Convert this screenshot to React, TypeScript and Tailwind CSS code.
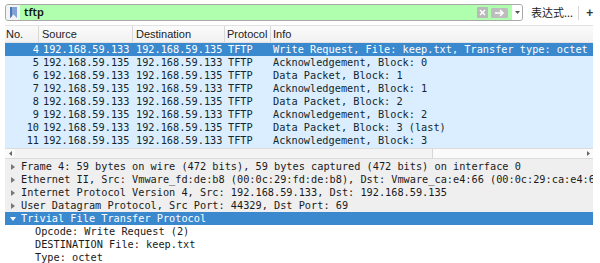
import React from 'react';

const MONO = { fontFamily: '"DejaVu Sans Mono", "Liberation Mono", monospace' };

const PACKETS = [
  { no: 4, src: '192.168.59.133', dst: '192.168.59.135', info: 'Write Request, File: keep.txt, Transfer type: octet' },
  { no: 5, src: '192.168.59.135', dst: '192.168.59.133', info: 'Acknowledgement, Block: 0' },
  { no: 6, src: '192.168.59.133', dst: '192.168.59.135', info: 'Data Packet, Block: 1' },
  { no: 7, src: '192.168.59.135', dst: '192.168.59.133', info: 'Acknowledgement, Block: 1' },
  { no: 8, src: '192.168.59.133', dst: '192.168.59.135', info: 'Data Packet, Block: 2' },
  { no: 9, src: '192.168.59.135', dst: '192.168.59.133', info: 'Acknowledgement, Block: 2' },
  { no: 10, src: '192.168.59.133', dst: '192.168.59.135', info: 'Data Packet, Block: 3 (last)' },
  { no: 11, src: '192.168.59.135', dst: '192.168.59.133', info: 'Acknowledgement, Block: 3' },
];

const TREE = [
  'Frame 4: 59 bytes on wire (472 bits), 59 bytes captured (472 bits) on interface 0',
  'Ethernet II, Src: Vmware_fd:de:b8 (00:0c:29:fd:de:b8), Dst: Vmware_ca:e4:66 (00:0c:29:ca:e4:66)',
  'Internet Protocol Version 4, Src: 192.168.59.133, Dst: 192.168.59.135',
  'User Datagram Protocol, Src Port: 44329, Dst Port: 69',
];

const TFTP_FIELDS = ['Opcode: Write Request (2)', 'DESTINATION File: keep.txt', 'Type: octet'];

function FilterBar() {
  return (
    <div className="flex h-[25px] items-center pl-[5px]">
      <div className="flex h-[17px] w-[518px] shrink-0 items-center overflow-hidden rounded-[3px] border border-[#a9a9a9] bg-[#afffaf]">
        <div className="flex h-full w-[14px] items-center justify-center bg-[#f4f4f4]">
          <svg width="7" height="11" viewBox="0 0 7 11">
            <path d="M0 0h7v11L3.5 7.5 0 11z" fill="#7fa3d6" />
            <path d="M0 0h2v9.2L0 11z" fill="#4d76b4" />
          </svg>
        </div>
        <span className="ml-[4px] flex-1 text-[11px] font-semibold text-[#111]" style={{ fontFamily: '"Noto Sans", sans-serif' }}>
          tftp
        </span>
        <svg width="11" height="11" viewBox="0 0 11 11" className="mr-[3px]">
          <rect width="11" height="11" rx="1" fill="#b9b9b9" />
          <path d="M3 3l5 5M8 3l-5 5" stroke="#fff" strokeWidth="1.5" />
        </svg>
        <svg width="17" height="10" viewBox="0 0 17 10" className="mr-[4px]">
          <rect width="17" height="10" rx="1.5" fill="#bdbdbd" />
          <path d="M4 5h8M9 2.2l3 2.8-3 2.8" stroke="#fff" strokeWidth="1.6" fill="none" />
        </svg>
        <div className="flex h-full w-[10px] items-center justify-center bg-white">
          <svg width="5" height="3" viewBox="0 0 5 3">
            <path d="M0 0h5L2.5 3z" fill="#555" />
          </svg>
        </div>
      </div>
      <span
        className="ml-[8px] whitespace-nowrap text-[11px] leading-none text-[#222]"
        style={{ fontFamily: '"Noto Sans CJK SC", sans-serif' }}
      >
        表达式...
      </span>
      <div className="ml-[5px] h-[14px] w-px shrink-0 bg-[#d6d6d6]" />
      <span className="ml-[7px] text-[12px] font-bold text-[#333]" style={{ fontFamily: '"Liberation Sans", sans-serif' }}>
        +
      </span>
    </div>
  );
}

function Header() {
  const cell = 'flex h-full items-center border-r border-[#d8d8d8]';
  return (
    <div
      className="flex h-[18px] border-y border-[#e2e2e2] bg-gradient-to-b from-[#fbfbfb] to-[#f1f1f1] text-[11px] text-[#222]"
      style={{ fontFamily: '"Liberation Sans", sans-serif' }}
    >
      <div className={`${cell} w-[34px] pl-[1px]`}>No.</div>
      <div className={`${cell} w-[94px] pl-[3px]`}>Source</div>
      <div className={`${cell} w-[92px] pl-[3px]`}>Destination</div>
      <div className={`${cell} w-[46px] pl-[2px]`}>Protocol</div>
      <div className="flex h-full flex-1 items-center pl-[2px]">Info</div>
    </div>
  );
}

export default function App() {
  return (
    <div className="h-[263px] w-[600px] overflow-hidden bg-white">
      <FilterBar />
      <div className="ml-[5px] w-[588px]">
        <Header />
        <div className="bg-[#daeeff] pb-[1px] text-[10.25px] leading-[13px]" style={MONO}>
          {PACKETS.map((p, i) => (
            <div
              key={p.no}
              className={`flex h-[13px] whitespace-pre ${i === 0 ? 'bg-[#3a88cd] text-white' : 'text-[#12272e]'}`}
            >
              <div className="w-[34px] text-right">{p.no}</div>
              <div className="w-[94px] pl-[4px]">{p.src}</div>
              <div className="w-[92px] pl-[3px]">{p.dst}</div>
              <div className="w-[46px] pl-[3px]">TFTP</div>
              <div className="flex-1 overflow-hidden pl-[2px]">{p.info}</div>
            </div>
          ))}
        </div>
        <div className="flex h-[11px] items-center border-y border-[#dcdcdc] bg-[#fafafa]">
          <span className="flex w-[10px] items-center justify-center">
            <svg width="3" height="5" viewBox="0 0 3 5">
              <path d="M3 0v5L0 2.5z" fill="#666" />
            </svg>
          </span>
          <div className="h-full w-[418px] border-r border-[#d6d6d6] bg-[#f3f3f3]" />
          <div className="flex-1" />
          <span className="flex w-[10px] items-center justify-center">
            <svg width="3" height="5" viewBox="0 0 3 5">
              <path d="M0 0v5L3 2.5z" fill="#666" />
            </svg>
          </span>
        </div>
        <div className="text-[10.25px] leading-[13px] text-[#1a1a1a]" style={MONO}>
          <div className="bg-[#efefef] pt-[1px]">
            {TREE.map((t) => (
              <div key={t} className="flex h-[13px] items-center overflow-hidden whitespace-pre">
                <span className="flex w-[16px] shrink-0 justify-center">
                  <svg width="4" height="6" viewBox="0 0 4 6">
                    <path d="M0 0v6L4 3z" fill="#777" />
                  </svg>
                </span>
                <span>{t}</span>
              </div>
            ))}
          </div>
          <div className="flex h-[13px] items-center bg-[#3a88cd] text-white">
            <span className="flex w-[16px] justify-center">
              <svg width="6" height="4" viewBox="0 0 6 4">
                <path d="M0 0h6L3 4z" fill="#fff" />
              </svg>
            </span>
            <span>Trivial File Transfer Protocol</span>
          </div>
          {TFTP_FIELDS.map((f) => (
            <div key={f} className="h-[13px] whitespace-pre pl-[30px]">
              {f}
            </div>
          ))}
        </div>
      </div>
    </div>
  );
}
